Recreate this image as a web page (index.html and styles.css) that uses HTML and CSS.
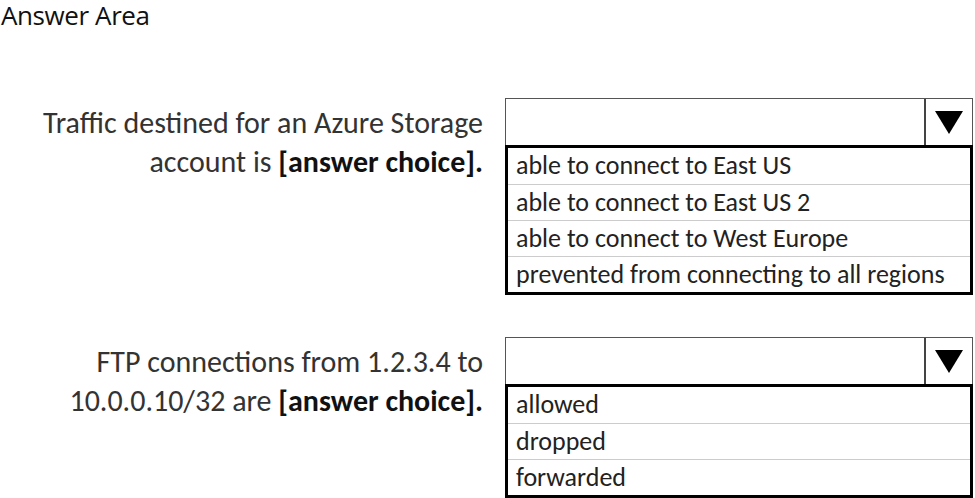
FILE: index.html
```html
<!DOCTYPE html>
<html>
<head>
	<meta charset="UTF-8">
	<title>Answer Area</title>
	<link rel="stylesheet" href="styles.css">
</head>
<body>
<h1 class="title">Answer Area</h1>

<div class="quiz">
	<div class="question">
		<p class="label">Traffic destined for an Azure Storage<br>account is <b>[answer choice].</b></p>
		<div class="dropdown">
			<div class="select">
				<span class="value"></span>
				<span class="arrow"><svg width="28" height="23" viewBox="0 0 28 23"><polygon points="0,0 28,0 14,23" fill="#000"/></svg></span>
			</div>
			<ul class="options">
				<li>able to connect to East US</li>
				<li>able to connect to East US 2</li>
				<li>able to connect to West Europe</li>
				<li>prevented from connecting to all regions</li>
			</ul>
		</div>
	</div>

	<div class="question">
		<p class="label">FTP connections from 1.2.3.4 to<br>10.0.0.10/32 are <b>[answer choice].</b></p>
		<div class="dropdown">
			<div class="select">
				<span class="value"></span>
				<span class="arrow"><svg width="28" height="23" viewBox="0 0 28 23"><polygon points="0,0 28,0 14,23" fill="#000"/></svg></span>
			</div>
			<ul class="options">
				<li>allowed</li>
				<li>dropped</li>
				<li>forwarded</li>
			</ul>
		</div>
	</div>
</div>
</body>
</html>
```

FILE: styles.css
```css
*{margin: 0;padding: 0;box-sizing: border-box;}
ul,li{list-style: none;}

body{background: #fff;color: #333;font-family: Carlito, Lato, "Liberation Sans", sans-serif;}

.title{font-family: "Open Sans", "Liberation Sans", sans-serif;font-weight: 400;font-size: 26px;line-height: 30px;letter-spacing: -0.4px;color: #111;padding-left: 1px;}

.quiz{display: flex;flex-direction: column;gap: 42px;padding-top: 68px;}
.question{display: flex;gap: 22px;align-items: flex-start;}
.label{width: 483px;text-align: right;font-size: 30px;line-height: 39px;padding-top: 5px;color: #333;}
.label b{color: #111;}

.dropdown{width: 468px;}
.select{display: flex;height: 47px;border: 1px solid #555;border-bottom: 0;}
.select .value{flex: 1;}
.select .arrow{width: 48px;border-left: 2px solid #444;display: flex;align-items: center;justify-content: center;}
.select .arrow svg{display: block;}

.options{border: 3px solid #000;}
.options li{height: 36px;line-height: 35px;padding-left: 8px;font-size: 26px;color: #222;border-top: 1px solid #ccc;}
.options li:first-child{border-top: 0;}
```
